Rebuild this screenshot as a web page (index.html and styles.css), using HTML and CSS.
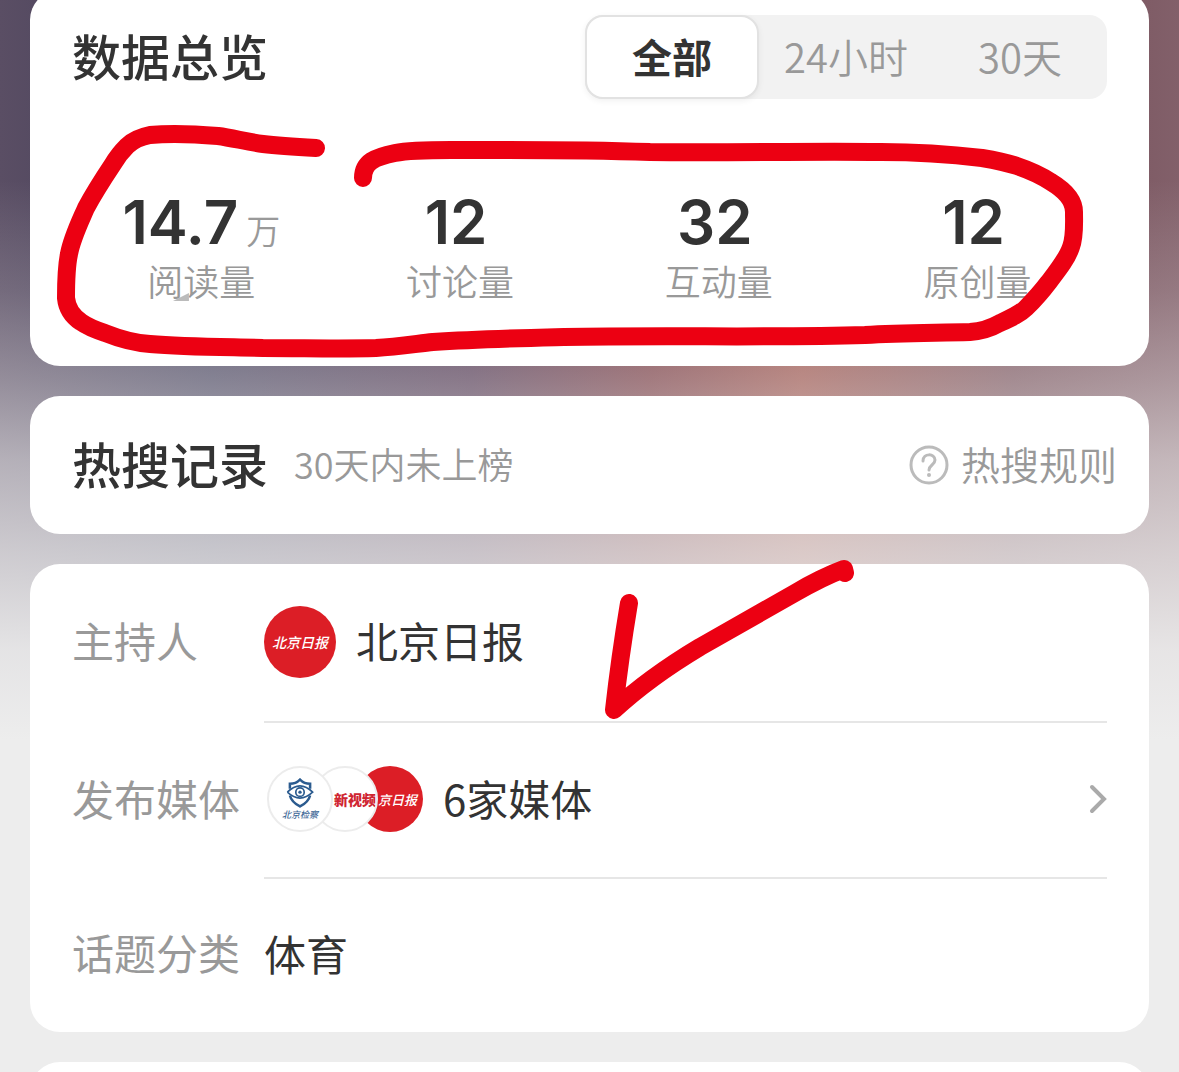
FILE: index.html
```html
<!DOCTYPE html>
<html lang="zh-CN">
<head>
  <meta charset="UTF-8">
  <meta name="viewport" content="width=device-width, initial-scale=1.0">
  <title>数据总览</title>
  <link rel="stylesheet" href="styles.css">
</head>
<body>

  <main class="page">
    <section class="card overview">
      <div class="card-header">
        <h2 class="title">数据总览</h2>
        <div class="tabs">
          <button class="tab active" type="button">全部</button>
          <button class="tab" type="button">24小时</button>
          <button class="tab" type="button">30天</button>
        </div>
      </div>

      <div class="stats">
        <div class="stat">
          <div class="stat-value">14.7<span class="unit">万</span></div>
          <div class="stat-label">阅读量<span class="corner"></span></div>
        </div>
        <div class="stat">
          <div class="stat-value">12<span class="unit"></span></div>
          <div class="stat-label">讨论量</div>
        </div>
        <div class="stat">
          <div class="stat-value">32<span class="unit"></span></div>
          <div class="stat-label">互动量</div>
        </div>
        <div class="stat">
          <div class="stat-value">12<span class="unit"></span></div>
          <div class="stat-label">原创量</div>
        </div>
      </div>

      <!-- hand-drawn circle around the numbers -->
      <svg class="marker circle" viewBox="0 0 1119 366" aria-hidden="true">
        <path d="M286 148 C268 147 250 146 233 144 C217 142 203 138 188 136 C165 134 140 133 120 135 C110 137 103 140 97 146 C92 151 87 157 83 164 C73 179 64 193 56 208 C49 224 42 238 39 254 C36 268 36 284 36 298 C37 308 42 316 51 322 C58 327 66 330 75 333 C90 339 104 343 120 344 C155 347 195 347 233 348 C275 348 310 349 346 348 C366 347 385 344 403 342 C450 339 495 338 534 337 C640 335 740 338 835 335 C870 333 905 333 940 332 C955 331 963 327 970 323 C981 318 990 314 996 308 C1005 299 1012 291 1018 283 C1028 270 1037 259 1041 247 C1045 237 1044 224 1044 212 C1044 200 1036 191 1021 182 C1012 176 999 170 987 166 C975 162 964 160 952 158 C918 154 885 152 851 152 C780 151 690 153 620 152 C540 149 470 150 421 150 C398 150 380 150 365 153 C345 157 333 162 333 178"/>
      </svg>
    </section>

    <section class="card hot">
      <h2 class="title">热搜记录</h2>
      <span class="hot-note">30天内未上榜</span>
      <a class="rules" href="#">
        <svg class="help" viewBox="0 0 40 40" aria-hidden="true">
          <circle cx="20" cy="20" r="18"/>
          <path d="M14 16 C14 8 26 8 26 15 C26 20 20 20 20 25"/>
          <circle class="dot" cx="20" cy="30" r="2"/>
        </svg>
        <span class="rules-text">热搜规则</span>
      </a>
    </section>

    <section class="card info">
      <div class="row">
        <div class="row-label">主持人</div>
        <div class="row-body">
          <span class="avatar host">北京日报</span>
          <span class="row-text">北京日报</span>
        </div>
      </div>
      <div class="row">
        <div class="row-label">发布媒体</div>
        <a class="row-body" href="#">
          <span class="avatars">
            <span class="avatar small police">
              <svg class="shield" viewBox="0 0 34 38" aria-hidden="true">
                <path d="M5 14 V8 Q12 8 17 3 Q22 8 29 8 V14 M5 22 Q7 30 17 35 Q27 30 29 22"/>
                <path class="thin" d="M2 18 Q17 3 32 18 Q17 32 2 18"/>
                <circle class="thin" cx="17" cy="18" r="5"/>
                <circle class="pupil" cx="17" cy="18" r="2"/>
              </svg>
              <span>北京检察</span>
            </span>
            <span class="avatar small news">新视频</span>
            <span class="avatar small daily">京日报</span>
          </span>
          <span class="row-text">6家媒体</span>
          <svg class="arrow" viewBox="0 0 18 30" aria-hidden="true">
            <path d="M3 3 L15 15 L3 27"/>
          </svg>
        </a>
      </div>
      <div class="row">
        <div class="row-label">话题分类</div>
        <div class="row-body">
          <span class="row-text">体育</span>
        </div>
      </div>

      <!-- hand-drawn tick -->
      <svg class="marker tick" viewBox="0 0 1119 468" aria-hidden="true">
        <path d="M599 39 C593 75 588 110 584 146 C612 120 640 101 670 83 L765 29 C782 19 798 11 814 5 L815 9"/>
      </svg>
    </section>

    <section class="card next"></section>
  </main>

</body>
</html>
```

FILE: styles.css
```css
* {
  box-sizing: border-box;
}

body {
  margin: 0;
  min-height: 100vh;
  font-family: "Noto Sans CJK SC", sans-serif;
  color: #333;
  background-color: #ededed;
  background-image:
    linear-gradient(rgba(237, 237, 237, 0) 180px, rgba(237, 237, 237, 0.18) 290px, rgba(237, 237, 237, 0.4) 380px, rgba(237, 237, 237, 0.62) 460px, rgba(237, 237, 237, 0.78) 550px, rgba(237, 237, 237, 0.94) 650px, #ededed 740px),
    linear-gradient(90deg, #5a4e64 0%, #403c58 18%, #482c48 40%, #713038 55%, #984a42 68%, #744c56 86%, #82606a 100%);
}

h2 {
  margin: 0;
}

a {
  color: inherit;
  text-decoration: none;
}

.page {
  display: flex;
  flex-direction: column;
  gap: 30px;
  height: 100vh;
  padding: 0 30px;
  overflow: hidden;
}

.card {
  position: relative;
  flex-shrink: 0;
  background: #fff;
  border-radius: 30px;
}

/* Overview card */
.overview {
  height: 376px;
  margin-top: -10px;
  padding: 25px 42px 0;
}

.card-header {
  display: flex;
  align-items: center;
  justify-content: space-between;
}

.title {
  padding-bottom: 4px;
  font-size: 49px;
  font-weight: 500;
  line-height: 80px;
}

.tabs {
  display: flex;
  background: #f2f2f2;
  border-radius: 18px;
}

.tab {
  width: 174px;
  height: 84px;
  padding: 0 0 2px;
  border: 0;
  border-radius: 18px;
  background: none;
  font-family: inherit;
  font-size: 40px;
  font-weight: 350;
  color: #999;
  cursor: pointer;
}

.tab.active {
  border: 2px solid #e2e2e2;
  background: #fff;
  box-shadow: 0 2px 6px rgba(0, 0, 0, 0.06);
  font-weight: 700;
  color: #333;
}

.stats {
  display: grid;
  grid-template-columns: repeat(4, 1fr);
  margin-top: 90px;
}

.stat {
  text-align: center;
}

.stat-value {
  height: 64px;
  font-family: Inter, "Noto Sans CJK SC", sans-serif;
  font-size: 60px;
  font-weight: 600;
  line-height: 66px;
}

.unit {
  margin-left: 8px;
  font-size: 34px;
  font-weight: 350;
  line-height: 1;
  color: #999;
}

.stat-label {
  position: relative;
  font-size: 36px;
  font-weight: 350;
  line-height: 54px;
  color: #999;
}

.corner {
  position: absolute;
  bottom: 6px;
  left: 39%;
  width: 16px;
  height: 8px;
  background: #bbb;
  clip-path: polygon(100% 0, 100% 100%, 0 100%);
}

/* Hot search card */
.hot {
  display: flex;
  align-items: center;
  height: 138px;
  padding: 0 32px 0 42px;
}

.hot-note {
  margin-left: 26px;
  padding-bottom: 4px;
  font-size: 36px;
  font-weight: 350;
  color: #999;
}

.rules {
  display: flex;
  align-items: center;
  gap: 12px;
  margin-left: auto;
  font-size: 39px;
  font-weight: 350;
  color: #999;
}

.rules-text {
  padding-bottom: 4px;
}

.help {
  width: 40px;
  height: 40px;
  fill: none;
  stroke: #bbb;
  stroke-width: 3;
  stroke-linecap: round;
}

.help .dot {
  fill: #bbb;
  stroke: none;
}

/* Info card */
.row {
  display: flex;
  height: 156px;
  padding: 0 42px;
  font-size: 42px;
}

.row:first-child {
  height: 159px;
}

.row-label {
  display: flex;
  align-items: center;
  width: 192px;
  padding-bottom: 8px;
  color: #999;
}

.row-body {
  display: flex;
  flex: 1;
  align-items: center;
  gap: 20px;
  padding-bottom: 2px;
  border-bottom: 2px solid #e6e6e6;
}

.row:nth-child(3) {
  height: 153px;
}

.row:nth-child(3) .row-body {
  border-bottom: 0;
}

.row-text {
  padding-bottom: 4px;
}

.avatar {
  display: flex;
  align-items: center;
  justify-content: center;
  width: 72px;
  height: 72px;
  overflow: hidden;
  border-radius: 50%;
  background: #dc1e26;
  font-size: 14px;
  font-style: italic;
  font-weight: 500;
  white-space: nowrap;
  color: #fff;
}

.avatars {
  display: flex;
  padding-left: 3px;
}

.avatar.small {
  width: 66px;
  height: 66px;
}

.avatar.small + .small {
  margin-left: -21px;
}

.avatar.police {
  z-index: 3;
  flex-direction: column;
  border: 2px solid #ececec;
  background: #fff;
  font-size: 9px;
  line-height: 12px;
  color: #3c6796;
}

.avatar.news {
  z-index: 2;
  justify-content: flex-end;
  border: 2px solid #ececec;
  background: #fff;
  font-style: normal;
  font-weight: 900;
  color: #cf2531;
}

.avatar.daily {
  justify-content: flex-end;
  padding-right: 6px;
  font-size: 13px;
}

.shield {
  width: 30px;
  height: 32px;
  fill: none;
  stroke: #2b5b8f;
  stroke-width: 3;
}

.shield .thin {
  stroke-width: 2;
}

.shield .pupil {
  fill: #2b5b8f;
  stroke: none;
}

.arrow {
  width: 18px;
  height: 30px;
  margin-left: auto;
  fill: none;
  stroke: #aaa;
  stroke-width: 4;
  stroke-linecap: round;
}

/* Red pen strokes */
.marker {
  position: absolute;
  bottom: 0;
  left: 0;
  width: 100%;
  overflow: visible;
  pointer-events: none;
  fill: none;
  stroke: #ec0012;
  stroke-width: 18;
  stroke-linecap: round;
  stroke-linejoin: round;
}

.next {
  height: 80px;
}
```
